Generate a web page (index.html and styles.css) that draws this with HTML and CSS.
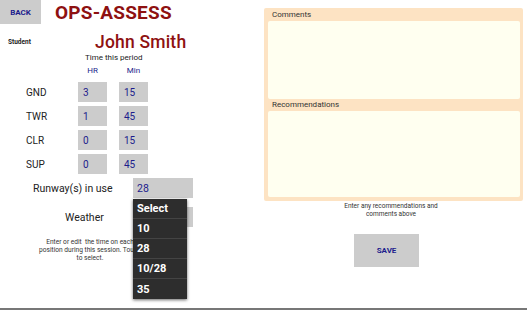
FILE: index.html
```html
<!DOCTYPE html>
<html lang="en">

<head>
  <meta charset="UTF-8">
  <meta name="viewport" content="width=device-width, initial-scale=1.0">
  <title>OPS-ASSESS</title>
  <link rel="stylesheet" href="styles.css">
</head>

<body>
  <div class="screen">
    <div class="left-col">
      <div class="header-row">
        <div class="btn back-btn">BACK</div>
        <h1 class="title">OPS-ASSESS</h1>
      </div>

      <div class="student-row">
        <span class="student-label">Student</span>
        <span class="student-name">John Smith</span>
      </div>

      <div class="period-title">Time this period</div>

      <div class="time-head">
        <span class="col-head">HR</span>
        <span class="col-head">Min</span>
      </div>

      <div class="time-grid">
        <span class="pos-label">GND</span>
        <span class="time-box">3</span>
        <span class="time-box">15</span>

        <span class="pos-label">TWR</span>
        <span class="time-box">1</span>
        <span class="time-box">45</span>

        <span class="pos-label">CLR</span>
        <span class="time-box">0</span>
        <span class="time-box">15</span>

        <span class="pos-label">SUP</span>
        <span class="time-box">0</span>
        <span class="time-box">45</span>
      </div>

      <div class="field-row runway-row">
        <span class="field-label runway-label">Runway(s) in use</span>
        <span class="field-box">28</span>
      </div>
      <div class="field-row weather-row">
        <span class="field-label weather-label">Weather</span>
        <span class="field-box"></span>
      </div>

      <p class="help-text">Enter or edit&nbsp; the time on each<br>position during this session. Touch<br>to select.</p>

      <!-- Runway spinner popup, open over the help text -->
      <ul class="dropdown">
        <li>Select</li>
        <li>10</li>
        <li>28</li>
        <li>10/28</li>
        <li>35</li>
      </ul>
    </div>

    <div class="right-col">
      <div class="notes-panel">
        <div class="notes-label">Comments</div>
        <div class="notes-box comments-box"></div>
        <div class="notes-label">Recommendations</div>
        <div class="notes-box recs-box"></div>
      </div>
      <p class="notes-hint">Enter any recommendations and<br>comments above</p>
      <div class="btn save-btn">SAVE</div>
    </div>
  </div>
  <div class="bottom-line"></div>
</body>

</html>
```

FILE: styles.css
```css
body {
  margin: 0;
  font-family: Roboto, "Liberation Sans", sans-serif;
  background-color: #fff;
  color: #222;
  width: 527px;
  height: 310px;
  overflow: hidden;
  display: flex;
  flex-direction: column;
}

.screen {
  display: flex;
  height: 308px;
}

.btn {
  background-color: #cccccc;
  color: #1c1c8c;
  font-weight: bold;
  display: flex;
  align-items: center;
  justify-content: center;
}

/* Left column */
.left-col {
  position: relative;
  width: 264px;
  flex-shrink: 0;
}

.header-row {
  display: flex;
  align-items: center;
  height: 24px;
}

.back-btn {
  width: 41px;
  height: 24px;
  font-size: 8px;
}

.title {
  margin: 0 0 0 14px;
  font-size: 19px;
  font-weight: bold;
  color: #8e1111;
  letter-spacing: 0.2px;
}

.student-row {
  display: flex;
  align-items: center;
  height: 24px;
  margin-top: 6px;
}

.student-label {
  font-size: 6.5px;
  font-weight: bold;
  margin-left: 8px;
  width: 87px;
}

.student-name {
  font-size: 17.5px;
  font-weight: 500;
  color: #8e1111;
  letter-spacing: 0.2px;
}

.period-title {
  margin-left: 85px;
  font-size: 8px;
  line-height: 10px;
  margin-top: -1px;
}

.time-head {
  display: flex;
  gap: 12px;
  margin: 3px 0 0 78px;
}

.col-head {
  width: 29px;
  font-size: 8px;
  line-height: 10px;
  color: #1c1c8c;
  text-align: center;
}

.time-grid {
  display: grid;
  grid-template-columns: 66px 29px 29px;
  grid-auto-rows: 20px;
  column-gap: 12px;
  row-gap: 4px;
  margin-top: 6px;
}

.pos-label {
  font-size: 10px;
  padding-left: 26px;
  display: flex;
  align-items: center;
}

.time-box {
  background-color: #cccccc;
  color: #1c1c8c;
  font-size: 10px;
  padding-left: 5px;
  display: flex;
  align-items: center;
}

.field-row {
  display: flex;
  align-items: center;
  height: 20px;
}

.runway-row {
  margin-top: 4px;
}

.weather-row {
  margin-top: 9px;
}

.field-label {
  width: 133px;
  box-sizing: border-box;
  font-size: 10.5px;
}

.runway-label {
  padding-left: 33px;
}

.weather-label {
  padding-left: 65px;
}

.field-box {
  width: 60px;
  height: 20px;
  background-color: #cccccc;
  color: #1c1c8c;
  font-size: 10.5px;
  padding-left: 4px;
  box-sizing: border-box;
  display: flex;
  align-items: center;
}

.help-text {
  width: 110px;
  margin: 11px 0 0 35px;
  font-size: 6.6px;
  line-height: 8px;
  text-align: center;
  color: #333;
  white-space: nowrap;
}

.dropdown {
  list-style-type: none;
  margin: 0;
  padding: 0;
  position: absolute;
  top: 199px;
  left: 133px;
  width: 54px;
  background-color: #2d2d2d;
  box-shadow: 0 1px 3px rgba(0, 0, 0, 0.6);
}

.dropdown li {
  height: 20px;
  box-sizing: border-box;
  padding-left: 4px;
  display: flex;
  align-items: center;
  color: #fff;
  font-size: 11px;
  font-weight: bold;
  border-bottom: 1px solid #444;
}

.dropdown li:last-child {
  border-bottom: none;
}

/* Right column */
.right-col {
  width: 259px;
  padding-top: 8px;
}

.notes-panel {
  background-color: #fde3c3;
  border-radius: 2px;
  padding: 0 3px 4px 4px;
}

.notes-label {
  font-size: 8px;
  color: #333;
  padding-left: 4px;
  height: 13px;
  line-height: 13px;
}

.notes-box {
  background-color: #fffff0;
  border-radius: 2px;
}

.comments-box {
  height: 78px;
}

.notes-box + .notes-label {
  height: 12px;
  line-height: 12px;
}

.recs-box {
  height: 86px;
}

.notes-hint {
  margin: 1px 0 0;
  font-size: 6.5px;
  line-height: 8px;
  text-align: center;
  color: #333;
  padding-right: 5px;
}

.save-btn {
  width: 65px;
  height: 33px;
  margin: 16px 0 0 90px;
  font-size: 8px;
}

.bottom-line {
  height: 2px;
  background-color: #777;
}
```
